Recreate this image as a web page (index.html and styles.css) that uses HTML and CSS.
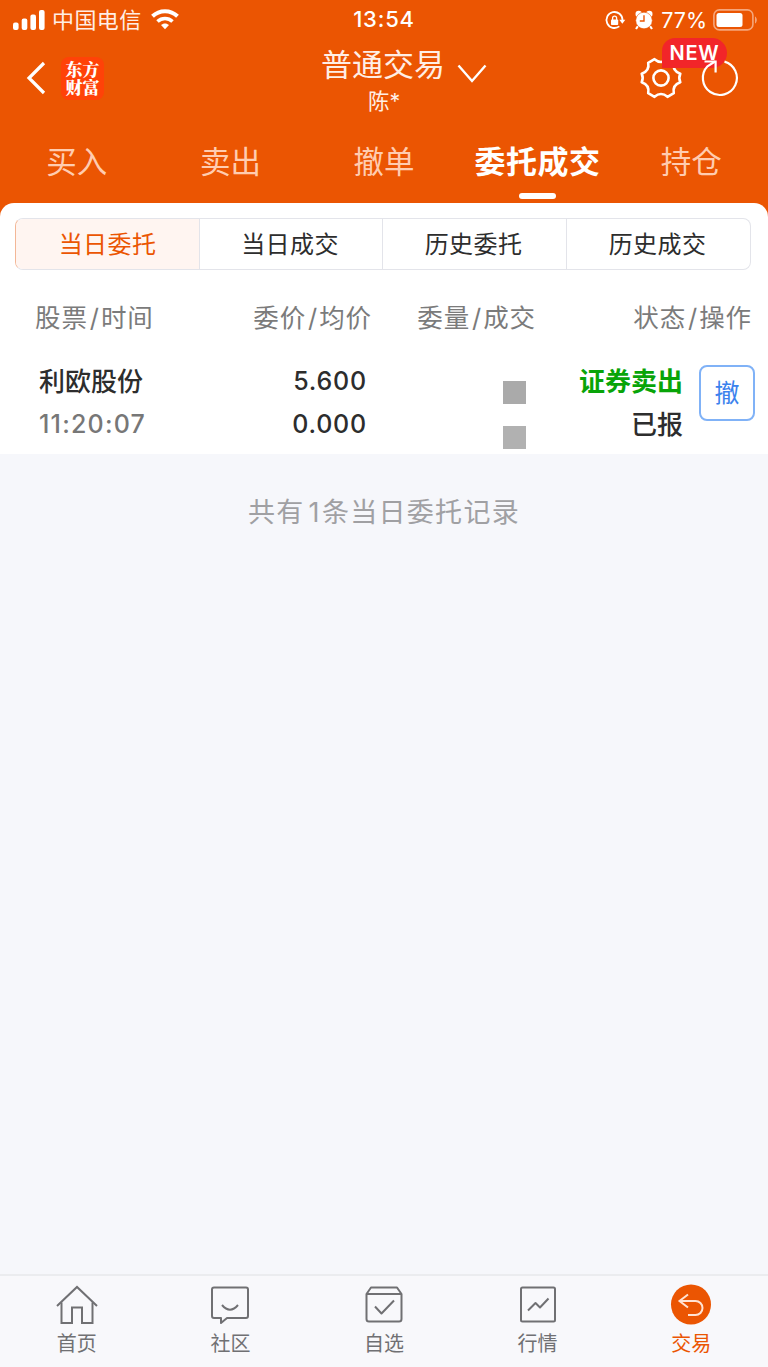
FILE: index.html
```html
<!DOCTYPE html>
<html lang="zh-CN">
<head>
    <meta charset="UTF-8">
    <meta name="viewport" content="width=device-width, initial-scale=1.0">
    <title>普通交易</title>
    <link rel="stylesheet" href="styles.css">
</head>
<body>

    <div class="app">
        <header class="header">
            <div class="status-bar">
                <div class="status-left">
                    <svg class="signal" width="32" height="20" viewBox="0 0 32 20" fill="#fff">
                        <rect x="0" y="12.5" width="5.6" height="7.5" rx="2"/>
                        <rect x="8.7" y="8.5" width="5.6" height="11.5" rx="2"/>
                        <rect x="17.4" y="4.5" width="5.6" height="15.5" rx="2"/>
                        <rect x="26" y="0" width="5.6" height="20" rx="2"/>
                    </svg>
                    <span class="carrier">中国电信</span>
                    <svg width="28" height="21" viewBox="0 0 28 21" fill="none" stroke="#fff">
                        <path d="M1.5 7.3C8.5 0.5 19.5 0.5 26.5 7.3" stroke-width="4"/>
                        <path d="M6.5 12.5C10.8 8.5 17.2 8.5 21.5 12.5" stroke-width="3.6"/>
                        <path d="M10 16.1C12.3 14 15.7 14 18 16.1L14 20.3Z" fill="#fff" stroke="none"/>
                    </svg>
                </div>
                <div class="status-time">13:54</div>
                <div class="status-right">
                    <svg width="20" height="18" viewBox="0 0 20 18" fill="none" stroke="#fff" stroke-width="1.8">
                        <path d="M14.3 15.4A8 8 0 1 1 17.5 9"/>
                        <path d="M14.3 8.8h6l-3 4z" fill="#fff" stroke="none"/>
                        <rect x="6" y="8.4" width="7.2" height="5.6" rx="0.8" fill="#fff" stroke="none"/>
                        <path d="M7.6 8.9V7.2a2 2 0 0 1 4 0v1.7" stroke-width="1.3"/>
                    </svg>
                    <svg class="alarm" width="18" height="20" viewBox="0 0 18 20">
                        <path d="M3 16l-2 3M15 16l2 3" stroke="#fff" stroke-width="2.2"/>
                        <circle cx="3.7" cy="4" r="3.2" fill="#fff"/>
                        <circle cx="14.3" cy="4" r="3.2" fill="#fff"/>
                        <circle cx="9" cy="10.5" r="8.3" fill="#fff" stroke="#eb5502" stroke-width="0.6"/>
                        <path d="M9 5.3v5.7H4.8" fill="none" stroke="#eb5502" stroke-width="1.4"/>
                    </svg>
                    <span class="percent">77%</span>
                    <svg width="44" height="22" viewBox="0 0 44 22">
                        <rect x="0.9" y="0.9" width="39" height="20" rx="5.5" fill="none" stroke="#f5a67c" stroke-width="1.6"/>
                        <rect x="3.5" y="4" width="26" height="14" rx="2.5" fill="#fff"/>
                        <path d="M42 7.5c2.4 1.2 2.4 5.8 0 7z" fill="#f5a67c"/>
                    </svg>
                </div>
            </div>

            <div class="nav-bar">
                <div class="nav-left">
                    <svg width="20" height="34" viewBox="0 0 20 34" fill="none" stroke="#fff" stroke-width="3.2">
                        <path d="M18 2L3 17l15 15"/>
                    </svg>
                    <div class="logo">东方<br>财富</div>
                </div>
                <div class="nav-title">
                    <div class="account-type">
                        <span>普通交易</span>
                        <svg width="30" height="20" viewBox="0 0 30 20" fill="none" stroke="#fff" stroke-width="2.4">
                            <path d="M1.500 1.500L15 17 28.500 1.500"/>
                        </svg>
                    </div>
                    <div class="account-name">陈*</div>
                </div>
                <div class="nav-right">
                    <div class="settings">
                        <svg width="42" height="42" viewBox="0 0 42 42" fill="none" stroke="#fff" stroke-width="2.6" stroke-linejoin="round">
                            <path d="M14.500 2.200Q21 7.800 27.500 2.200L33.800 5.800Q32.200 14 40.300 16.700Q38.300 21 40.300 25.200Q32.200 28 33.800 36.200L27.500 39.800Q21 34.200 14.500 39.800L8.200 36.200Q9.800 28 1.700 25.200Q3.700 21 1.700 16.700Q9.800 14 8.200 5.800Z"/>
                            <circle cx="21" cy="21" r="7.600"/>
                        </svg>
                        <span class="badge">NEW</span>
                    </div>
                    <svg class="refresh" width="38" height="38" viewBox="0 0 38 38" fill="none" stroke="#fff" stroke-width="2.200">
                        <path d="M23.500 2.600A17 17 0 1 1 6.500 7.300L14 2.500"/>
                        <path d="M3.500 2.500H14.600V13.500"/>
                    </svg>
                </div>
            </div>

            <nav class="tabs">
                <a class="tab">买入</a>
                <a class="tab">卖出</a>
                <a class="tab">撤单</a>
                <a class="tab active">委托成交</a>
                <a class="tab">持仓</a>
            </nav>
        </header>

        <main class="content">
            <section class="orders">
                <div class="segments">
                    <div class="segment active">当日委托</div>
                    <div class="segment">当日成交</div>
                    <div class="segment">历史委托</div>
                    <div class="segment">历史成交</div>
                </div>

                <div class="list-head">
                    <span>股票<i>/</i>时间</span>
                    <span>委价<i>/</i>均价</span>
                    <span>委量<i>/</i>成交</span>
                    <span>状态<i>/</i>操作</span>
                </div>

                <div class="order-row">
                    <div class="stock">
                        <div class="name">利欧股份</div>
                        <div class="time">11:20:07</div>
                    </div>
                    <div class="price">
                        <div>5.600</div>
                        <div>0.000</div>
                    </div>
                    <div class="amount">
                        <span class="mask"></span>
                        <span class="mask light"></span>
                    </div>
                    <div class="state">
                        <div class="sell">证券卖出</div>
                        <div>已报</div>
                    </div>
                    <button class="cancel-btn">撤</button>
                </div>
            </section>

            <p class="summary">共有<span class="count">1</span>条当日委托记录</p>
        </main>

        <footer class="bottom-bar">
            <a class="bottom-item">
                <svg width="42" height="40" viewBox="0 0 42 40" fill="none" stroke="#707073" stroke-width="2">
                    <path d="M1 21L21 2l20 19"/>
                    <path d="M5.500 17.500V38H16V22.500H26V38H36.500V17.500"/>
                </svg>
                <span>首页</span>
            </a>
            <a class="bottom-item">
                <svg width="42" height="40" viewBox="0 0 42 40" fill="none" stroke="#707073" stroke-width="2" stroke-linejoin="round">
                    <path d="M5 2.500H37Q39 2.500 39 4.500V31Q39 33 37 33H18L12 38V33H5Q3 33 3 31V4.500Q3 2.500 5 2.500Z"/>
                    <path d="M13 20Q21 29.500 29 20"/>
                </svg>
                <span>社区</span>
            </a>
            <a class="bottom-item">
                <svg width="42" height="40" viewBox="0 0 42 40" fill="none" stroke="#707073" stroke-width="2" stroke-linejoin="round">
                    <path d="M3.500 9L8 2.500H34L38.500 9V34Q38.500 36.500 36 36.500H6Q3.500 36.500 3.500 34Z"/>
                    <path d="M3.500 9H38.500M12 21.500l6.500 7L31 15.500"/>
                </svg>
                <span>自选</span>
            </a>
            <a class="bottom-item">
                <svg width="42" height="40" viewBox="0 0 42 40" fill="none" stroke="#707073" stroke-width="2" stroke-linejoin="round">
                    <rect x="4" y="2.500" width="34" height="34" rx="1.500"/>
                    <path d="M11 25.500l7.500-7.500 4.500 4.500 8.500-9"/>
                </svg>
                <span>行情</span>
            </a>
            <a class="bottom-item active">
                <svg width="42" height="40" viewBox="0 0 42 40" fill="none" stroke="#ffe3d3" stroke-width="2">
                    <circle cx="21" cy="19.500" r="20" fill="#eb5502" stroke="none"/>
                    <path d="M18 9.500l-8.500 6.500 8.500 6.500M10 16H25.500a7 7 0 0 1 0 14H18"/>
                </svg>
                <span>交易</span>
            </a>
        </footer>
    </div>

</body>
</html>
```
FILE: styles.css
```css
* {
    box-sizing: border-box;
}
body {
    margin: 0;
    font-family: Inter, "Noto Sans CJK SC", sans-serif;
    background-color: #f6f7fb;
    color: #2d2d2d;
}
svg {
    display: block;
    flex: none;
    overflow: visible;
}
.app {
    display: flex;
    flex-direction: column;
    height: 1367px;
    overflow: hidden;
}

/* Header */
.header {
    height: 222px;
    flex: none;
    background-color: #eb5502;
    color: #fff;
}
.status-bar {
    display: grid;
    grid-template-columns: 1fr 80px 1fr;
    align-items: center;
    height: 38px;
    padding: 0 11px 0 13px;
}
.status-left,
.status-right {
    display: flex;
    align-items: center;
    height: 38px;
}
.status-right {
    justify-content: flex-end;
}
.carrier {
    margin: 0 9px 0 7px;
    padding-top: 1px;
    color: #ffeee5;
    font-size: 22px;
    letter-spacing: 0.4px;
    line-height: 37px;
}
.status-time {
    font-size: 22px;
    font-weight: 500;
    letter-spacing: 0.8px;
    text-align: center;
    line-height: 39px;
    text-indent: -2px;
}
.alarm {
    margin: 0 8px 0 10px;
}
.percent {
    margin-right: 6px;
    padding-top: 1px;
    font-size: 21.5px;
    line-height: 38px;
}
.nav-bar {
    display: grid;
    grid-template-columns: 1fr 123px 1fr;
    height: 84px;
    padding: 0 29px 0 26px;
}
.nav-left {
    display: flex;
    align-items: center;
    gap: 15px;
    height: 80px;
}
.logo {
    width: 43px;
    height: 43px;
    padding-top: 3px;
    border-radius: 8px;
    background-color: #ff4208;
    font-family: "Noto Serif CJK SC", "Noto Sans CJK SC", serif;
    font-size: 17px;
    font-weight: 900;
    line-height: 18px;
    text-align: center;
}
.account-type {
    display: flex;
    align-items: center;
    gap: 12px;
    height: 49px;
    color: #ffeee5;
    font-size: 31px;
    white-space: nowrap;
}
.account-type svg {
    margin-top: 22px;
}
.account-name {
    padding-left: 47px;
    color: #ffeee5;
    font-size: 21.5px;
    line-height: 29px;
}
.nav-right {
    display: flex;
    justify-content: flex-end;
    align-items: center;
    gap: 19px;
    height: 80px;
}
.settings {
    position: relative;
}
.badge {
    position: absolute;
    top: -19px;
    left: 22px;
    width: 65px;
    height: 30px;
    border-radius: 13px 15px 15px 0;
    background-color: #f22529;
    font-size: 20px;
    font-weight: 600;
    letter-spacing: 0.8px;
    line-height: 30px;
    text-align: center;
}
/* keeps the arrow above the badge */
.refresh {
    position: relative;
}
.tabs {
    display: grid;
    grid-template-columns: repeat(5, 1fr);
    height: 81px;
}
.tab {
    display: flex;
    flex-direction: column;
    align-items: center;
    color: #ffccb0;
    font-size: 30.5px;
    line-height: 79px;
    white-space: nowrap;
}
.tab.active {
    color: #fff;
    font-weight: 700;
    font-size: 31px;
    letter-spacing: 0.5px;
}
.tab.active::after {
    content: "";
    width: 37px;
    height: 6px;
    margin-top: -8px;
    border-radius: 3px;
    background-color: #fff;
}

/* Order list */
.content {
    flex: 1;
    margin-top: -19px;
}
.orders {
    height: 251px;
    padding: 15px 17px 0 15px;
    border-radius: 14px 14px 0 0;
    background-color: #fff;
}
.segments {
    display: grid;
    grid-template-columns: 183px 183px 184px 1fr;
    height: 52px;
    border: 1px solid #e3e4ea;
    border-left-color: #f3b797;
    border-radius: 8px;
    overflow: hidden;
}
.segment {
    font-size: 24px;
    letter-spacing: 0.4px;
    line-height: 52px;
    text-align: center;
}
.segment + .segment {
    padding-right: 2px;
    border-left: 1px solid #e3e4ea;
}
.segment.active {
    background-color: #fff5f1;
    color: #eb5502;
}
.list-head {
    display: grid;
    grid-template-columns: 175px 162px 164px 1fr;
    height: 90px;
    padding-left: 20px;
    margin-right: -1px;
    color: #7b7b7b;
    font-size: 25.5px;
    letter-spacing: 0.9px;
    line-height: 96px;
    white-space: nowrap;
}
.list-head span {
    text-align: right;
}
.list-head span:first-child {
    text-align: left;
}
.list-head i {
    margin: 0 1px 0 2px;
    font-style: normal;
}
.order-row {
    display: grid;
    grid-template-columns: 168px 160px 159px 157px 56px;
    padding-left: 24px;
    margin-right: -4px;
    font-size: 26px;
    font-weight: 500;
    line-height: 43px;
    text-align: right;
    white-space: nowrap;
}
.stock {
    text-align: left;
}
.name {
    height: 43px;
}
.time {
    color: #777;
}
.price,
.time {
    font-size: 25px;
    letter-spacing: 0.8px;
}
.time {
    letter-spacing: 1.2px;
}
.amount {
    display: flex;
    flex-direction: column;
    align-items: flex-end;
    gap: 22px;
    padding-top: 21px;
}
.mask {
    width: 23px;
    height: 23px;
    background-color: #aaa;
}
.mask.light {
    background-color: #b1b1b1;
}
.sell {
    color: #08a408;
    font-weight: 700;
}
.cancel-btn {
    width: 56px;
    height: 56px;
    margin: 5px 0 0 16px;
    padding: 0;
    border: 2px solid #80b2f7;
    border-radius: 8px;
    background-color: #fff;
    color: #3b82ed;
    font-family: inherit;
    font-size: 25px;
    line-height: 52px;
}
.summary {
    margin: 38px 0 0;
    color: #a0a0a3;
    font-size: 27px;
    letter-spacing: 1.3px;
    line-height: 42px;
    text-align: center;
}
.count {
    margin: 0 1px 0 4px;
}

/* Bottom bar */
.bottom-bar {
    display: grid;
    grid-template-columns: repeat(5, 1fr);
    flex: none;
    height: 93px;
    padding-top: 9px;
    border-top: 2px solid #ebecef;
    background-color: #f8f8fb;
}
.bottom-item {
    display: flex;
    flex-direction: column;
    align-items: center;
    color: #707073;
    font-size: 20px;
    line-height: 38px;
}
.bottom-item.active {
    color: #eb5502;
}
```
